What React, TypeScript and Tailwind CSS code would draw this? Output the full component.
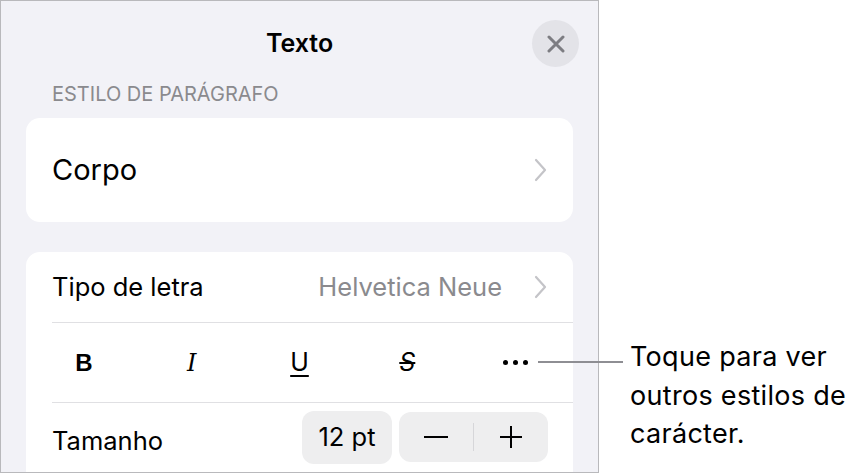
import React from "react";

const Chevron = () => (
  <svg width="13" height="24" viewBox="0 0 13 24" fill="none">
    <path d="M2 2 L11 12 L2 22" stroke="#c4c4c8" strokeWidth="2.2" strokeLinecap="round" strokeLinejoin="round" />
  </svg>
);

export default function App() {
  return (
    <div
      className="relative w-[859px] h-[473px] bg-white overflow-hidden flex"
      style={{ fontFamily: "Inter, 'Helvetica Neue', Arial, sans-serif" }}
    >
      {/* Panel */}
      <div className="w-[599px] h-[473px] shrink-0 bg-[#f2f2f7] border-[1.5px] border-[#b9b9bc] flex flex-col">
        {/* Header */}
        <div className="relative h-[83px] shrink-0 flex items-center justify-center pt-[2px]">
          <span className="text-[25px] font-semibold text-black">Texto</span>
          <div className="absolute right-[19px] top-[19px] w-[47px] h-[47px] rounded-full bg-[#e3e3e8] flex items-center justify-center">
            <svg width="18" height="18" viewBox="0 0 18 18">
              <path d="M2 2 L16 16 M16 2 L2 16" stroke="#7d7d82" strokeWidth="3" strokeLinecap="round" />
            </svg>
          </div>
        </div>
        <div className="pl-[51px] h-[35px] shrink-0 text-[20px] text-[#8a8a8e] leading-[22px] -mt-[1px]">
          ESTILO DE PARÁGRAFO
        </div>
        {/* Card 1 */}
        <div className="mx-[25px] h-[104px] shrink-0 bg-white rounded-[14px] flex items-center justify-between pl-[26px] pr-[26px]">
          <span className="text-[29px] text-black">Corpo</span>
          <Chevron />
        </div>
        {/* Card 2 */}
        <div className="mx-[25px] mt-[30px] flex-1 bg-white rounded-t-[14px] flex flex-col">
          <div className="h-[70px] shrink-0 flex items-center justify-between pl-[26px] pr-[26px]">
            <span className="text-[25.5px] text-black">Tipo de letra</span>
            <div className="flex items-center gap-[32px]">
              <span className="text-[25.5px] text-[#8a8a8e]">Helvetica Neue</span>
              <Chevron />
            </div>
          </div>
          <div className="ml-[26px] h-px bg-[#e0e0e3]" />
          <div className="h-[79px] shrink-0 grid grid-cols-5 items-center pl-[4px] pr-[4px]">
            <div className="flex justify-center">
              <span className="text-[24px] font-bold text-black" style={{ fontFamily: "'Liberation Sans', Arial, sans-serif" }}>B</span>
            </div>
            <div className="flex justify-center">
              <span className="text-[24px] italic text-black" style={{ fontFamily: "'DejaVu Serif', serif" }}>I</span>
            </div>
            <div className="flex justify-center">
              <span className="text-[25px] text-black underline underline-offset-[4px] decoration-[1.5px]">U</span>
            </div>
            <div className="flex justify-center">
              <span className="text-[25px] italic text-black line-through decoration-[1.5px]">S</span>
            </div>
            <div className="flex justify-center gap-[5px]">
              <span className="w-[5px] h-[5px] rounded-full bg-black" />
              <span className="w-[5px] h-[5px] rounded-full bg-black" />
              <span className="w-[5px] h-[5px] rounded-full bg-black" />
            </div>
          </div>
          <div className="ml-[26px] h-px bg-[#e0e0e3]" />
          <div className="flex-1 flex items-start justify-between pl-[26px] pr-[25px] pt-[8px]">
            <span className="text-[25.5px] text-black mt-[11px]">Tamanho</span>
            <div className="flex gap-[7px]">
              <div className="w-[90px] h-[53px] rounded-[12px] bg-[#eeeeef] flex items-center justify-center text-[25.5px] text-black">
                12 pt
              </div>
              <div className="w-[149px] h-[50px] mt-[1px] rounded-[12px] bg-[#eeeeef] flex items-center">
                <div className="flex-1 flex items-center justify-center">
                  <svg width="24" height="4" viewBox="0 0 24 4"><rect x="0" y="1" width="24" height="2" fill="#000" /></svg>
                </div>
                <div className="w-px h-[28px] bg-[#d6d6d9]" />
                <div className="flex-1 flex items-center justify-center">
                  <svg width="24" height="24" viewBox="0 0 24 24"><path d="M12 1 V23 M1 12 H23" stroke="#000" strokeWidth="2" /></svg>
                </div>
              </div>
            </div>
          </div>
        </div>
      </div>

      {/* Callout */}
      <div className="absolute left-[538px] top-[361px] w-[85px] h-[2px] bg-[#8e8e93]" />
      <div className="absolute left-[630px] top-[338px] text-[27px] leading-[38.5px] text-black tracking-[0.3px]">
        <div>Toque para ver</div>
        <div>outros estilos de</div>
        <div>carácter.</div>
      </div>
    </div>
  );
}
